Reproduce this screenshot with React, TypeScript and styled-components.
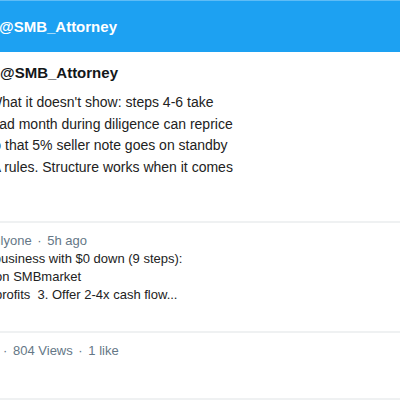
import React from 'react'
import styled, { createGlobalStyle } from 'styled-components'

const GlobalStyle = createGlobalStyle`
    html, body {
        margin: 0;
        padding: 0;
        background: #ffffff;
        overflow: hidden;
    }
    body {
        font-family: 'Liberation Sans', Arial, sans-serif;
    }
`

// the view is cropped on the left, so each wrapped line keeps its own start
const bodyLines = [
    { text: "What it doesn't show: steps 4-6 take", indent: -11 },
    { text: 'A bad month during diligence can reprice', indent: -21 },
    { text: 'So that 5% seller note goes on standby', indent: -16 },
    { text: 'SBA rules. Structure works when it comes', indent: -27 },
]

const relatedLines = [
    { text: 'Buy a business with $0 down (9 steps):', indent: -43 },
    { text: '1. Find a business on SMBmarket', indent: -114 },
    { text: '2. Check profits  3. Offer 2-4x cash flow...', indent: -60 },
]

const App = () => {
    return (
        <React.Fragment>
            <GlobalStyle />
            <Page>
                <Header>@SMB_Attorney</Header>
                <Card>
                    <Title>@SMB_Attorney</Title>
                    <Body>
                        {bodyLines.map((l) => (
                            <Line key={l.text} $indent={l.indent}>{l.text}</Line>
                        ))}
                    </Body>
                </Card>
                <Related>
                    <Meta $indent={-30}>
                        @Onlyone <Dot>·</Dot> 5h ago
                    </Meta>
                    <RelatedText>
                        {relatedLines.map((l) => (
                            <Line key={l.text} $indent={l.indent}>{l.text}</Line>
                        ))}
                    </RelatedText>
                </Related>
                <Stats>
                    <Meta $indent={-64}>
                        12 Replies <Dot>·</Dot> 804 Views <Dot>·</Dot> 1 like
                    </Meta>
                </Stats>
            </Page>
        </React.Fragment>
    )
}

export default App

const Page = styled.div`
    width: 420px;
    margin-left: -20px;
`

const Header = styled.div`
    height: 51px;
    display: flex;
    align-items: center;
    padding-left: 19px;
    background: #1da1f2;
    border-top: 1px solid #5ebcf6;
    color: #ffffff;
    font-size: 15px;
    font-weight: 700;
`

const Card = styled.div`
    padding: 11px 0 43px 20px;
    border-bottom: 2px solid #eff1f2;
`

const Title = styled.div`
    font-size: 15px;
    font-weight: 700;
    line-height: 20px;
    color: #14171a;
    margin-bottom: 9px;
`

const Body = styled.div`
    font-size: 14px;
    line-height: 21.6px;
    color: #222222;
`

const Line = styled.div<{ $indent: number }>`
    margin-left: ${(p) => p.$indent}px;
    white-space: pre;
`

const Related = styled.div`
    padding: 9px 0 27px 20px;
    border-bottom: 2px solid #eff1f2;
`

const Meta = styled.div<{ $indent: number }>`
    margin-left: ${(p) => p.$indent}px;
    font-size: 13px;
    line-height: 18px;
    color: #657786;
    white-space: pre;
`

const Dot = styled.span`
    margin: 0 2px;
`

const RelatedText = styled.div`
    font-size: 13px;
    line-height: 18px;
    color: #222222;
`

const Stats = styled.div`
    height: 56px;
    padding: 9px 0 0 20px;
    border-bottom: 2px solid #eff1f2;
`
